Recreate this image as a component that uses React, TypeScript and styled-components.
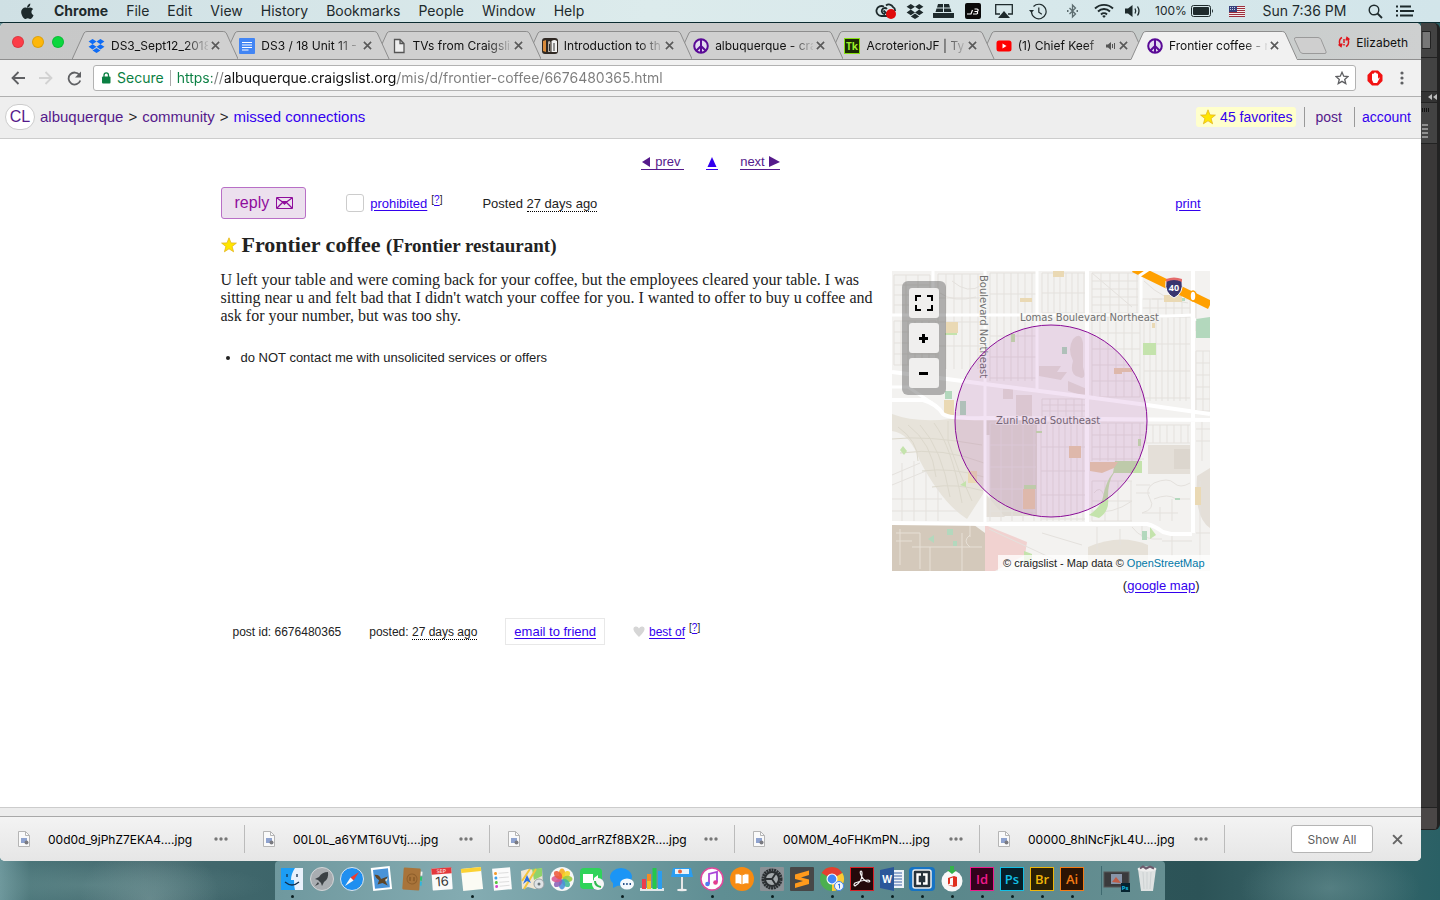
import React from "react";
import styled, { createGlobalStyle, css } from "styled-components";

const ui = `Inter, "Liberation Sans", sans-serif`;
const sans = `"Liberation Sans", Helvetica, Arial, sans-serif`;
const serif = `"Liberation Serif", "Times New Roman", serif`;

const GlobalStyle = createGlobalStyle`
  *, *::before, *::after { box-sizing: border-box; }
  body { margin: 0; font-family: ${sans}; color: #222; }
  button { font: inherit; color: inherit; background: none; border: 0; padding: 0; cursor: pointer; }
  svg { display: block; flex: none; }
`;

/* ---------- desktop ---------- */

const Desktop = styled.div`
  display: flex;
  flex-direction: column;
  min-height: 100vh;
  overflow: hidden;
  background:
    radial-gradient(ellipse 180px 24px at 90px 885px, rgba(120, 160, 160, 0.35), transparent),
    radial-gradient(ellipse 70px 60px at 150px 900px, rgba(140, 170, 172, 0.45), transparent),
    radial-gradient(ellipse 90px 40px at 1330px 888px, rgba(120, 160, 162, 0.4), transparent),
    linear-gradient(90deg, #6d979c 0, #4a7478 30px, #45696e 150px, #3d656a 280px, #2c5357 1200px, #3d686c 1330px, #2a6065 100%);
`;

const MenuBar = styled.header`
  display: flex;
  justify-content: space-between;
  align-items: center;
  height: 23px;
  padding: 0 22px 0 21px;
  background: linear-gradient(90deg, #cfe0e4, #dcebec 45%, #d2e5ea);
  border-bottom: 1px solid #0b2b30;
  font-family: ${ui};
  font-size: 14px;
  line-height: 22px;
  color: #1e2a2c;
`;

const MenuList = styled.nav`
  display: flex;
  align-items: center;
  gap: 18px;
`;

const AppleMark = styled.svg`
  margin-right: 2px;
`;

const MenuItem = styled.button<{ $bold?: boolean }>`
  font-weight: ${(p) => (p.$bold ? 700 : 400)};
`;

const StatusArea = styled.div`
  display: flex;
  align-items: center;
`;

const StatusSlot = styled.button<{ $w: number }>`
  display: flex;
  align-items: center;
  justify-content: center;
  gap: 4px;
  width: ${(p) => p.$w}px;
  height: 22px;
  font-size: ${(p) => (p.$w === 75 ? 12 : 14)}px;
  white-space: nowrap;
`;

const Stage = styled.div`
  display: flex;
  flex: 1;
`;

/* ---------- browser window ---------- */

const Window = styled.div`
  position: relative;
  z-index: 1;
  display: flex;
  flex: 1;
  flex-direction: column;
  min-width: 0;
  overflow: hidden;
  border-radius: 5px;
  background: #fff;
`;

const TabStrip = styled.div`
  display: flex;
  height: 37px;
  background: linear-gradient(90deg, #c7c8c8, #cacaca 50%, #c6cbca 80%, #ced0d0);
  box-shadow: inset 0 -1px #8f8f8f;
`;

const Lights = styled.div`
  display: flex;
  gap: 8px;
  width: 72px;
  padding: 13px 0 0 12px;
`;

const Light = styled.button<{ $c: string }>`
  width: 12px;
  height: 12px;
  border-radius: 50%;
  background: ${(p) => p.$c};
  box-shadow: inset 0 0 0 1px rgba(0, 0, 0, 0.12);
`;

const Tabs = styled.div`
  display: flex;
  flex: 1;
  min-width: 0;
  padding-top: 8px;
`;

const TabBox = styled.div<{ $z: number }>`
  position: relative;
  z-index: ${(p) => p.$z};
  display: flex;
  flex: 1;
  align-items: center;
  min-width: 0;
  height: 29px;
  padding-left: 16px;
  font-family: ${ui};
  font-size: 12px;
  color: #111;
`;

const TabShape = styled.svg`
  position: absolute;
  left: 0;
  top: 0;
  width: calc(100% + 15px);
  height: 29px;
  z-index: -1;
`;

const TabTitle = styled.button`
  flex: 1;
  min-width: 0;
  margin-left: 6px;
  overflow: hidden;
  text-align: left;
  white-space: nowrap;
  line-height: 20px;
  mask-image: linear-gradient(90deg, #000 76%, rgba(0, 0, 0, 0.1));
`;

const TabClose = styled.button`
  display: flex;
  padding: 3px;
`;

const NewTab = styled.button`
  width: 36px;
  padding: 7px 0 0 11px;
`;

const Profile = styled.button`
  display: flex;
  align-items: center;
  gap: 6px;
  height: 20px;
  margin: 9px 13px 0 20px;
  font-family: ${ui};
  font-size: 12px;
  color: #111;
`;

const StripEnd = styled.div`
  display: flex;
`;

const Toolbar = styled.div`
  display: flex;
  align-items: center;
  height: 37px;
  padding-left: 11px;
  background: #f1f1f1;
  border-bottom: 1px solid #b0b0b0;
`;

const NavButton = styled.button`
  width: 28px;
`;

const Omnibox = styled.div`
  display: flex;
  flex: 1;
  align-items: center;
  height: 26px;
  margin: 0 11px 0 -2px;
  padding: 0 6px 0 7px;
  background: #fff;
  border: 1px solid #b2b2b2;
  border-radius: 3px;
  font-family: ${ui};
  font-size: 14px;
`;

const Secure = styled.button`
  display: flex;
  align-items: center;
  gap: 6px;
  padding-right: 6px;
  margin-right: 6px;
  border-right: 1px solid #aaa;
  line-height: 16px;
  color: #0b8043;
`;

const Address = styled.input`
  flex: 1;
  min-width: 0;
  padding: 0;
  border: 0;
  outline: 0;
  font: inherit;
  line-height: 20px;
  color: #222;
  background: linear-gradient(90deg, #0b8043 35px, #7c7c7c 35px 48px, #111 48px 220px, #7c7c7c 220px);
  background-clip: text;
  -webkit-text-fill-color: transparent;
`;

const ToolButton = styled.button`
  display: flex;
  justify-content: center;
  width: 38px;
`;

/* ---------- craigslist page ---------- */

const link = css<{ $visited?: boolean }>`
  color: ${(p) => (p.$visited ? "#551a8b" : "#3300ee")};
`;

const A = styled.a<{ $visited?: boolean }>`
  ${link}
  text-underline-offset: 2px;
`;

const PageHeader = styled.header`
  display: flex;
  justify-content: space-between;
  align-items: center;
  height: 42px;
  padding: 0 10px 1px 5px;
  background: #eee;
  border-bottom: 1px solid #ccc;
  font-size: 15px;
  line-height: 20px;
`;

const Crumbs = styled.nav`
  display: flex;
  align-items: center;
  gap: 5px;
  a { text-decoration: none; }
`;

const Logo = styled.a`
  display: flex;
  align-items: center;
  justify-content: center;
  width: 30px;
  height: 26px;
  border: 1px solid #ccc;
  border-radius: 13px;
  background: #fff;
  color: #551a8b;
  font-size: 16px;
`;

const UserLinks = styled.nav`
  display: flex;
  align-items: center;
  font-size: 14px;
  a { text-decoration: none; }
`;

const Favorites = styled.a`
  display: flex;
  align-items: center;
  gap: 4px;
  height: 20px;
  margin-right: 8px;
  padding: 0 4px;
  border-radius: 3px;
  background: #ffffcc;
  color: #3300ee;
`;

const UserLink = styled.a<{ $visited?: boolean; $pad: number }>`
  ${link}
  border-left: 1px solid #999;
  padding: 0 ${(p) => (p.$visited ? 12 : 0)}px 0 ${(p) => p.$pad}px;
`;

const Main = styled.main`
  flex: 1;
  width: 980px;
  max-width: 100%;
  margin: 0 auto;
  font-size: 13px;
`;

const Pager = styled.nav`
  display: flex;
  justify-content: center;
  gap: 22px;
  padding: 15px 0 17px;
  line-height: 18px;
`;

const PagerLink = styled.a<{ $visited?: boolean }>`
  ${link}
  display: flex;
  align-items: center;
  gap: 4px;
  height: 15px;
  margin-top: 1px;
  border-bottom: 1px solid;
  text-decoration: none;
`;

const Actions = styled.div`
  display: flex;
  align-items: center;
  height: 32px;
`;

const Reply = styled.button`
  display: flex;
  align-items: center;
  gap: 7px;
  height: 32px;
  margin-right: 40px;
  padding: 0 12px 0 13px;
  border: 1px solid #b86fc6;
  border-radius: 3px;
  background: #ece0ee;
  color: #8f0c9c;
  font-size: 16px;
`;

const Flag = styled.label`
  display: flex;
  align-items: center;
  gap: 6px;
  margin-right: 40px;
`;

const Tick = styled.input`
  appearance: none;
  width: 18px;
  height: 18px;
  margin: 0;
  border: 1px solid #ccc;
  border-radius: 3px;
  background: #fff;
`;

const Sup = styled.sup`
  margin-left: 4px;
  font-size: 10px;
  line-height: 9px;
`;

const Ago = styled.time`
  border-bottom: 1px dotted #000;
`;

const Print = styled(A)`
  margin-left: auto;
`;

const Title = styled.h2`
  display: flex;
  align-items: center;
  gap: 5px;
  margin: 12px 0;
  font-family: ${serif};
  font-size: 22px;
  line-height: 27px;
  small { font-size: 19px; }
`;

const Posting = styled.section`
  display: flex;
  justify-content: space-between;
  margin-right: -9px;
`;

const Copy = styled.div`
  width: 656px;
`;

const Body = styled.p`
  margin: 0 0 24px;
  font-family: ${serif};
  font-size: 16px;
  line-height: 18px;
`;

const Notices = styled.ul`
  margin: 0;
  padding-left: 20px;
  line-height: 18px;
`;

const MapColumn = styled.aside`
  width: 318px;
`;

const MapFrame = styled.div`
  position: relative;
  height: 300px;
`;

const MapControls = styled.div`
  position: absolute;
  left: 10px;
  top: 10px;
  display: flex;
  flex-direction: column;
  gap: 5px;
  padding: 7px;
  border-radius: 6px;
  background: rgba(80, 80, 80, 0.42);
`;

const MapButton = styled.button`
  display: flex;
  align-items: center;
  justify-content: center;
  width: 30px;
  height: 30px;
  border-radius: 3px;
  background: #f0efee;
`;

const Credit = styled.div`
  position: absolute;
  right: 0;
  bottom: 0;
  padding: 0 5px;
  background: rgba(255, 255, 255, 0.75);
  font-size: 11px;
  line-height: 16px;
  white-space: nowrap;
  a { color: #0078a8; text-decoration: none; }
`;

const GoogleMap = styled.p`
  margin: 6px 10px 0 0;
  line-height: 18px;
  text-align: right;
`;

const PostInfo = styled.footer`
  display: flex;
  align-items: center;
  gap: 28px;
  margin-top: 23px;
  padding-left: 12px;
  font-size: 12px;
  line-height: 16px;
`;

const EmailBox = styled.div`
  height: 27px;
  padding: 5px 8px;
  border: 1px solid #e8e8e8;
  font-size: 13px;
`;

const BestOf = styled.span`
  display: flex;
  align-items: center;
  gap: 4px;
`;

const PageFoot = styled.div`
  height: 9px;
  background: #ececec;
  border-top: 1px solid #ccc;
`;

/* ---------- downloads ---------- */

const Downloads = styled.div`
  display: flex;
  align-items: center;
  height: 45px;
  padding-right: 18px;
  border-top: 1px solid #a8a8a8;
  background: linear-gradient(#f3f3f3, #e6e6e6);
  font-family: ${ui};
  font-size: 12px;
  color: #000;
`;

const Download = styled.div`
  display: flex;
  align-items: center;
  width: 245px;
  height: 28px;
  padding: 0 16px 0 18px;
  border-right: 1px solid #bbb;
`;

const FileName = styled.button`
  margin: 0 auto 0 18px;
`;

const ShowAll = styled.button`
  width: 82px;
  height: 28px;
  margin: 0 19px 0 auto;
  border: 1px solid #b5b5b5;
  border-radius: 3px;
  background: #fff;
  color: #5c5c5c;
`;

/* ---------- panel behind the window ---------- */

const Panel = styled.aside`
  display: flex;
  flex-direction: column;
  width: 19px;
  margin-bottom: 31px;
  border-right: 3px solid #222;
  border-radius: 0 6px 6px 0;
  background: #3c3c3c;
  overflow: hidden;
`;

const PanelCell = styled.div<{ $h?: number; $bg?: string }>`
  display: flex;
  align-items: center;
  height: ${(p) => (p.$h ? p.$h + "px" : "auto")};
  flex: ${(p) => (p.$h ? "none" : 1)};
  padding-left: 1px;
  background: ${(p) => p.$bg || "#434343"};
  border-bottom: 1px solid #222;
`;

/* ---------- dock ---------- */

const Dock = styled.nav`
  display: flex;
  align-self: center;
  height: 39px;
  padding: 0 3px 0 2px;
  border-radius: 4px 4px 0 0;
  background: linear-gradient(90deg, #6f989e, #84acb2 22%, #5f8e93 50%, #5a878b 75%, #668f92);
`;

const DockItem = styled.button<{ $on?: boolean }>`
  display: flex;
  flex-direction: column;
  align-items: center;
  width: 30px;
  padding-top: 6px;
  &::after {
    content: "";
    width: 3px;
    height: 3px;
    margin-top: 4px;
    border-radius: 50%;
    background: ${(p) => (p.$on ? "#0c2022" : "transparent")};
  }
`;

const DockRule = styled.span`
  width: 1px;
  height: 29px;
  margin: 5px 0 0 14px;
  background: #3f6a70;
`;

/* ---------- small icons ---------- */

const Cross = ({ s = 9, c = "#555", w = 2 }: { s?: number; c?: string; w?: number }) => (
  <svg width={s} height={s} viewBox="0 0 10 10">
    <path d="M1 1l8 8M9 1l-8 8" stroke={c} strokeWidth={w} fill="none" />
  </svg>
);

const Dropbox = ({ c, w = 17 }: { c: string; w?: number }) => (
  <svg width={w} height={w} viewBox="0 0 18 18" fill={c}>
    <path d="M4.8 2L9 4.8 4.8 7.6.6 4.8zM13.2 2l4.2 2.8-4.2 2.8L9 4.8zM4.8 7.6L9 10.4l-4.2 2.8-4.2-2.8zM13.2 7.6l4.2 2.8-4.2 2.8L9 10.4zM9 11.6l4.2 2.8L9 17l-4.2-2.6z" />
  </svg>
);

const Peace = () => (
  <svg width="16" height="16" viewBox="0 0 16 16" fill="none" stroke="#5a0a96" strokeWidth="2">
    <circle cx="8" cy="8" r="6.8" fill="#e3daf0" />
    <path d="M8 1v14M8 8l-4.8 4.8M8 8l4.8 4.8" />
  </svg>
);

const Star = ({ s }: { s: number }) => (
  <svg width={s} height={s} viewBox="0 0 16 16">
    <path d="M8 .8l2 5.1 5.4.2-4.3 3.4 1.5 5.3L8 11.8l-4.6 3 1.5-5.3L.6 6.1 6 5.9z" fill="#ffe600" stroke="#e3b51d" strokeWidth=".8" />
  </svg>
);

const tabIcons: Record<string, React.ReactNode> = {
  dropbox: <Dropbox c="#0f6cf5" w={17} />,
  docs: (
    <svg width="16" height="16" viewBox="0 0 16 16">
      <rect width="16" height="16" rx="1" fill="#4285f4" />
      <path d="M3 4.5h10M3 7h10M3 9.500h10M3 12h6.500" stroke="#fff" strokeWidth="1.2" />
    </svg>
  ),
  page: (
    <svg width="16" height="16" viewBox="0 0 16 16" fill="#eee" stroke="#555" strokeWidth="1.3">
      <path d="M3.500 1.500h5.500l4 4v9h-9.500zM9 1.500v4h4" />
    </svg>
  ),
  book: (
    <svg width="16" height="16" viewBox="0 0 16 16">
      <rect width="16" height="16" rx="3" fill="#2f2823" />
      <path d="M1 3l3-1v12l-3-1z" fill="#d98a3a" />
      <path d="M6 4q1-2 2.500 0v10H6z" fill="#b9b2a8" />
      <path d="M9.500 3q3-2 5.500 0v11H9.500z" fill="#f2f2f2" />
      <path d="M12 5v8M7.500 6v7" stroke="#333" />
    </svg>
  ),
  peace: <Peace />,
  typekit: (
    <svg width="16" height="16" viewBox="0 0 16 16">
      <rect x=".5" y=".5" width="15" height="15" fill="#1c2a05" stroke="#87e013" />
      <text x="8" y="12" textAnchor="middle" fontFamily="Open Sans, sans-serif" fontWeight="700" fontSize="10" fill="#9cf02a">Tk</text>
    </svg>
  ),
  youtube: (
    <svg width="16" height="16" viewBox="0 0 16 16">
      <rect x=".5" y="2.500" width="15" height="11" rx="2.500" fill="#f00" />
      <path d="M6.500 5.500l4 2.500-4 2.500z" fill="#fff" />
    </svg>
  ),
};

const tabs = [
  { icon: "dropbox", title: "DS3_Sept12_2018" },
  { icon: "docs", title: "DS3 / 18 Unit 11 -" },
  { icon: "page", title: "TVs from Craigslis" },
  { icon: "book", title: "Introduction to th" },
  { icon: "peace", title: "albuquerque - cra" },
  { icon: "typekit", title: "AcroterionJF | Typ" },
  { icon: "youtube", title: "(1) Chief Keef", audio: true },
  { icon: "peace", title: "Frontier coffee - r", active: true },
];

const Tab = ({ t, i }: { t: (typeof tabs)[number]; i: number }) => (
  <TabBox $z={t.active ? 20 : 10 - i}>
    <TabShape viewBox="0 0 166 29" preserveAspectRatio="none">
      <path
        d="M0 28.500L12 2Q13 .5 15 .5H151Q153 .5 154 2L166 28.500V29H0z"
        fill={t.active ? "#f1f1f1" : "#d0d0d0"}
      />
      <path
        d={"M0 28.500L12 2Q13 .5 15 .5H151Q153 .5 154 2L166 28.500" + (t.active ? "" : "H0")}
        fill="none"
        stroke="#8d8d8d"
        vectorEffect="non-scaling-stroke"
      />
    </TabShape>
    {tabIcons[t.icon]}
    <TabTitle>{t.title}</TabTitle>
    {t.audio && (
      <svg width="10" height="10" viewBox="0 0 10 10">
        <path d="M0 3.500h2L5 1v8L2 6.500H0z" fill="#555" />
        <path d="M6.500 3v4M8.500 2v6" stroke="#555" />
      </svg>
    )}
    <TabClose aria-label="Close tab"><Cross s={9} c="#5a5a5a" w={1.8} /></TabClose>
  </TabBox>
);

/* ---------- menu bar icons ---------- */

const ink = "#1e2a2c";
const statusIcons: { w: number; el: React.ReactNode }[] = [
  {
    w: 29,
    el: (
      <svg width="22" height="18" viewBox="0 0 22 18" fill="none" stroke={ink} strokeWidth="1.800">
        <path d="M11 3.500a4.500 4.500 0 0 1 7 1.500 4 4 0 0 1 2 4M12 14H6.500a5 5 0 1 1 2.500-9.300" />
        <path d="M12 7a3 3 0 1 0-2 5M12 12L8.500 8.500" />
        <circle cx="16" cy="12" r="5" fill="#e00b0b" stroke="none" />
      </svg>
    ),
  },
  { w: 29, el: <Dropbox c={ink} w={18} /> },
  {
    w: 29,
    el: (
      <svg width="21" height="16" viewBox="0 0 21 16" fill={ink}>
        <path d="M5 1h5v3.500H4zM11 1h5l1 3.500h-6zM3.500 5.500H10V9H2.500zM11 5.500h6.500l1 3.500H11zM0 10h21v4.500q0 .5-1 .5H1q-1 0-1-.5z" />
      </svg>
    ),
  },
  {
    w: 29,
    el: (
      <svg width="16" height="16" viewBox="0 0 16 16">
        <rect width="16" height="16" rx="2" fill="#0a0a0a" />
        <path d="M2 11h4l1.500-4M8 11h3.500q2-.5.5-2.500H9.500h3q1.500-2-.5-2.500H9.500" fill="none" stroke="#fff" strokeWidth="1.200" />
      </svg>
    ),
  },
  {
    w: 34,
    el: (
      <svg width="18" height="16" viewBox="0 0 18 16">
        <path d="M5 11H.7V1.700h16.600V11H13" fill="none" stroke={ink} strokeWidth="1.300" />
        <path d="M9 8l6 7H3z" fill={ink} />
      </svg>
    ),
  },
  {
    w: 34,
    el: (
      <svg width="18" height="17" viewBox="0 0 18 17" fill="none" stroke={ink} strokeWidth="1.200">
        <path d="M2.500 9a7.300 7.300 0 1 0 2-5.500M9.800 4.500v4.700l3 2" />
        <path d="M0 7l2.500 3L5 7z" fill={ink} stroke="none" />
      </svg>
    ),
  },
  {
    w: 34,
    el: (
      <svg width="13" height="16" viewBox="0 0 13 16" fill="none" stroke="#5c6c6f" strokeWidth="1.300">
        <path d="M3.500 5l6 6L6.500 14V2l3 3-6 6" />
        <path d="M1 8h1.500M10.500 8H12" strokeWidth="2" />
      </svg>
    ),
  },
  {
    w: 29,
    el: (
      <svg width="20" height="16" viewBox="0 0 20 16" fill="none" stroke={ink} strokeWidth="1.900">
        <path d="M1 5.500a13 13 0 0 1 18 0M4 8.500a8.600 8.600 0 0 1 12 0M7 11.500a4.300 4.300 0 0 1 6 0" />
        <path d="M10 15l-1.800-2.100a2.800 2.800 0 0 1 3.600 0z" fill={ink} stroke="none" />
      </svg>
    ),
  },
  {
    w: 29,
    el: (
      <svg width="18" height="14" viewBox="0 0 18 14" fill="none" stroke={ink} strokeWidth="1.300">
        <path d="M1 4.500h3L8.500 1v12L4 9.500H1z" fill={ink} stroke="none" />
        <path d="M11 4.500q1.500 2.500 0 5M13.500 2.500q3 4.500 0 9" />
      </svg>
    ),
  },
  {
    w: 75,
    el: (
      <>
        100%
        <svg width="23" height="12" viewBox="0 0 23 12">
          <rect x=".5" y=".5" width="19" height="11" rx="2" fill="none" stroke={ink} />
          <rect x="2" y="2" width="16" height="8" rx="1" fill={ink} />
          <path d="M21 4q2 2 0 4z" fill={ink} />
        </svg>
      </>
    ),
  },
  {
    w: 29,
    el: (
      <svg width="16" height="11" viewBox="0 0 16 11">
        <rect width="16" height="11" fill="#f3eeee" />
        <path d="M0 .5h16M0 2.500h16M0 4.500h16M0 6.500h16M0 8.500h16M0 10.500h16" stroke="#9c2f3d" />
        <rect width="8" height="6" fill="#37427d" />
        <path d="M1 1.500h6M1 3.500h6" stroke="#c8cce4" strokeDasharray="1 1" />
      </svg>
    ),
  },
  { w: 107, el: "Sun 7:36 PM" },
  {
    w: 34,
    el: (
      <svg width="15" height="15" viewBox="0 0 15 15" fill="none" stroke={ink} strokeWidth="1.400">
        <circle cx="6" cy="6" r="4.800" />
        <path d="M9.500 9.500l4.500 4.500" strokeWidth="1.800" />
      </svg>
    ),
  },
  {
    w: 26,
    el: (
      <svg width="18" height="12" viewBox="0 0 18 12" stroke={ink} strokeWidth="1.800">
        <path d="M0 1.500h2M4 1.500h11M0 6h2M4 6h14M0 10.500h2M4 10.500h13" />
      </svg>
    ),
  },
];

/* ---------- map drawing ---------- */

const lines = (x0: number, y0: number, x1: number, y1: number, dx: number, dy: number) => {
  let d = "";
  for (let x = x0; x <= x1; x += dx) d += `M${x} ${y0}V${y1}`;
  for (let y = y0; y <= y1; y += dy) d += `M${x0} ${y}H${x1}`;
  return d;
};

const MapDrawing = () => (
  <svg width="318" height="300" viewBox="0 0 318 300">
    <rect width="318" height="300" fill="#f3f2f0" />
    <path d="M0 143Q24 152 58 148H93V220L75 248Q50 232 28 190 18 162 0 160z" fill="#e7e3da" />
    <path d="M98 163h47v82H98zM93 148h52v16H93z" fill="#dfdad3" />
    <path d="M93 222l20 24h-20zM256 174h42v29h-42zM111 118h10v10h-10zM124 124h16v22h-16zM147 95h22l-4 6h10l-6 8-22-4zM176 110l19 8v8l-19-6zM181 68q8-8 10 4v24q4 14-4 10-10-2-6-16-6-12 0-22zM305 205l13-8v60q-16-10-13-52z" fill="#e4dfd8" />
    <path d="M282 178h16v20h-16z" fill="#dcd6ce" />
    <path d="M0 254H82l11 8v38H0z" fill="#d4c9bb" />
    <path d="M196 276q32-14 60-2v26h-60z" fill="#e6e1d8" />
    <path d="M93 254l42 17-2 13-30 16H93z" fill="#f1d2d0" />
    {/* minor streets */}
    <g fill="none" stroke="#e4e1dd" strokeWidth="1">
      <path d={lines(2, 4, 38, 44, 12, 10)} />
      <path d={lines(46, 3, 92, 98, 8, 24)} />
      <path d={lines(98, 2, 144, 110, 7, 21)} />
      <path d={lines(150, 2, 194, 42, 6, 20)} />
      <path d={lines(200, 46, 248, 126, 8, 16)} />
      <path d={lines(200, 2, 246, 42, 9, 8)} />
      <path d={lines(252, 46, 298, 130, 6, 27)} />
      <path d={lines(250, 28, 298, 44, 8, 9)} />
      <path d={lines(304, 80, 318, 140, 7, 12)} />
      <path d={lines(2, 50, 44, 94, 7, 11)} />
      <path d={lines(150, 128, 194, 146, 8, 6)} />
      <path d={lines(149, 152, 194, 250, 6, 24)} />
      <path d={lines(200, 152, 252, 190, 8, 12)} />
      <path d={lines(254, 154, 298, 172, 7, 18)} />
      <path d={lines(98, 152, 144, 250, 11, 22)} />
      <path d={lines(200, 210, 240, 250, 13, 20)} />
      <path d="M0 204l28-12M0 214l34-14M0 228h50M0 240h70M10 192v58M22 190v60M34 200v50M46 215v35M304 158h14M304 170h14M310 150v40M200 240q20 4 40-10M97 258l90 42M150 262l40 12M205 256v30M228 258v16M250 254v12M270 270h30M280 265v20M304 262h14M308 210v80M240 256q10 14 30 12" />
      <path d="M262 212q-10 6-4 16t-8 14h36M262 212q14-6 20 0t16 0M262 228q14-6 22 0h14M268 236v14M280 228v22M244 214h14M244 222h14M202 222q6-8 10 2t-4 18" />
      <path d="M200 2l40 34M252 10q20 20 44 22M304 20v40M260 28h10M60 10q16 14 30 4M48 22q14 10 36 4" />
    </g>
    <g fill="none" stroke="#dcd8cc" strokeWidth="1">
      <path d="M6 156q20 14 20 34M16 154q24 18 28 52M28 154q22 24 30 72M42 152q18 24 28 80M56 150v20q10 30 24 60M0 168q34-4 90 6M8 182q44-6 84 10M30 200q30-4 62 6M40 216q24-4 52 4" />
    </g>
    <path d="M4 262h24v36M4 270h16M8 258v36M20 276h70M38 276v24M70 262v38M78 254v12M78 264q-8 6 0 12" fill="none" stroke="#e7e0d6" />
    {/* parks, schools */}
    <path d="M53 62h12v2H53zM251 72h13v12h-13zM119 63h4v8h-4zM8 179l3-4 4 5-3 4zM245 190h5v12h-28q-6 8-6 24 2 14-9 21l-10-3q12-8 14-18 3-16 10-24l2-12zM132 214h12v4h-12zM258 256l6 8-6 4zM246 168h3v7h-3zM175 288l6 2-4 4zM68 214l6-4v6zM144 160h6v2h-6zM132 280l8 3v10h-8z" fill="#c4e3ac" />
    <path d="M304 48l14-2v21h-14zM170 76h5v7h-5zM68 130h6v14h-6zM250 260h5v9h-5zM36 268l6-4v8zM55 258h6v6h-6zM210 196l4-4-1 8zM284 27h9v3h-9zM283 227h5v2h-5zM53 120h7v8h-7zM61 270h4v5h-4z" fill="#b3d8bd" />
    <path d="M161 0h11v6h-11zM54 51h12v11H54zM52 129h10v15H52zM76 200h9v12h-9zM272 24h18v7h-18zM303 216h6v18h-6zM128 27h12v4h-12zM260 52h3v5h-3z" fill="#ead9b4" />
    <path d="M177 175h12v12h-12zM198 191h28l-4 6-12 5-12-2zM131 218h12v20h-12zM222 97h18v4h-10v2h-8z" fill="#e8cfae" />
    {/* major roads */}
    <g fill="none" stroke="#fff" strokeWidth="3" strokeLinejoin="round">
      <path d="M0 44H246Q262 46 300 44M41 0V44M93 0V252M145 0V118M249 0V44M0 116h16l24 16M304 48l-4 2" />
      <path d="M0 101l55 7 38 5 102 13 60 8 63 9M0 129h31q14 4 20 14 6 5 42 4l225 2M195 0V252M0 252l93 1h162q8 2 16 8l8 2h21M301 0V262" strokeWidth="4" />
    </g>
    <path d="M242-3l76 37" stroke="#ffa000" strokeWidth="9" fill="none" />
    <path d="M247 5l12-8" stroke="#fff" strokeWidth="3" />
    <ellipse cx="301" cy="25" rx="3" ry="5" fill="#fff" stroke="#ffa000" strokeWidth="1.500" />
    <path d="M274 10q8-4 16 0 2 12-8 17-10-5-8-17z" fill="#39356f" stroke="#fff" />
    <path d="M274 11q8-4 16 0v-3q-8-3-16 0z" fill="#e46b6b" />
    <text x="282" y="20" textAnchor="middle" fontFamily="Open Sans, sans-serif" fontSize="9" fontWeight="700" fill="#fff">40</text>
    <g fontFamily="DejaVu Sans, sans-serif" fontSize="10" fill="#707070" stroke="#f6f5f3" strokeOpacity=".7" strokeWidth="2" paintOrder="stroke">
      <text x="128" y="50">Lomas Boulevard Northeast</text>
      <text x="104" y="153">Zuni Road Southeast</text>
      <text transform="translate(88 4) rotate(90)">Boulevard Northeast</text>
    </g>
    <circle cx="159" cy="150" r="96" fill="#8f0099" fillOpacity=".11" stroke="#8a0c98" strokeWidth="1" />
  </svg>
);

/* ---------- dock drawings ---------- */

const adobe = (t: string, c: string, bg: string) => (
  <>
    <rect x=".5" y=".5" width="23" height="23" fill={bg} stroke={c} />
    <text x="12" y="17" textAnchor="middle" fontFamily="Open Sans, sans-serif" fontWeight="600" fontSize="13" fill={c}>{t}</text>
  </>
);

const petals = ["#f7a81b", "#f5d327", "#9ccc3c", "#43b89a", "#4a90d9", "#8b62b8", "#d8588f", "#ee5a3a"];

const dock: { name: string; on?: boolean; el: React.ReactNode }[] = [
  {
    name: "Finder", on: true, el: (
      <>
        <rect x="1" y="1" width="22" height="22" fill="#e9f1fb" />
        <path d="M1 1h14q-4 6-4 12h3q0 6 1 10H1z" fill="#1c9df5" />
        <path d="M7 7v3M17 7v3M5 15q7 6 14 0" fill="none" stroke="#13304f" strokeWidth="1.300" />
      </>
    ),
  },
  {
    name: "Launchpad", el: (
      <>
        <circle cx="12" cy="12" r="11.500" fill="#a9adb1" stroke="#d3d6d8" />
        <path d="M18 5q-6 0-9 5l-4 2 3 1 3 3 1 3 2-4q5-3 4-10zM8 15l-3 4 4-2z" fill="#3b4044" />
      </>
    ),
  },
  {
    name: "Safari", el: (
      <>
        <circle cx="12" cy="12" r="11.500" fill="#1f8ff0" stroke="#dfe6ea" />
        <path d="M19 5l-5.500 8.500-3-3z" fill="#f03b2e" />
        <path d="M5 19l5.500-8.500 3 3z" fill="#f7f7f7" />
      </>
    ),
  },
  {
    name: "Mail", el: (
      <g transform="rotate(-6 12 12)">
        <rect x="2" y="0" width="19" height="23" fill="#fff" />
        <rect x="4" y="2" width="15" height="19" fill="#4a93d8" />
        <path d="M5 7q5 0 6 5l7-2-3 4 2 5-5-3-5 1 2-4q-3-2-4-6z" fill="#5f4527" /><path d="M15 13l3-1-2 3z" fill="#f3e9d0" />
      </g>
    ),
  },
  {
    name: "Contacts", el: (
      <g transform="rotate(4 12 12)">
        <path d="M20 4h2v4h-2z" fill="#f4f4f4" /><path d="M20 9h2v4h-2z" fill="#2bc86b" /><path d="M20 14h2v4h-2z" fill="#2bb8e0" />
        <rect x="3" y="1" width="17" height="22" rx="1" fill="#a9743a" />
        <circle cx="12" cy="12" r="5" fill="none" stroke="#8f5f2b" /><path d="M9 10h2v4H9zM13 10h2v4h-2z" fill="#8f5f2b" />
      </g>
    ),
  },
  {
    name: "Calendar", el: (
      <g transform="rotate(-4 12 12)">
        <rect x="2" y="1" width="20" height="22" rx="1" fill="#fafafa" />
        <rect x="2" y="1" width="20" height="6" fill="#e4373b" />
        <text x="12" y="6" textAnchor="middle" fontFamily="Inter, sans-serif" fontSize="5" fill="#fff">SEP</text>
        <text x="12" y="19" textAnchor="middle" fontFamily="Inter, sans-serif" fontSize="13" fill="#333">16</text>
      </g>
    ),
  },
  {
    name: "Notes", on: true, el: (
      <g transform="rotate(-6 12 12)">
        <rect x="2" y="1" width="20" height="22" fill="#fbfbf4" />
        <rect x="2" y="1" width="20" height="4" fill="#fbd233" />
      </g>
    ),
  },
  {
    name: "Reminders", el: (
      <g transform="rotate(-5 12 12)">
        <rect x="3" y="1" width="18" height="22" fill="#fbfbfb" />
        <circle cx="6" cy="6" r="1.500" fill="#f59b2b" /><circle cx="6" cy="10.500" r="1.500" fill="#3ba0ea" /><circle cx="6" cy="15" r="1.500" fill="#55c33c" /><circle cx="6" cy="19" r="1.500" fill="#d64ac8" />
        <path d="M9 6h10M9 10.500h10M9 15h10M9 19h10" stroke="#ddd" />
      </g>
    ),
  },
  {
    name: "Maps", el: (
      <>
        <path d="M1 4l7-2 7 1 7-2 1 18-8 3-7-2-6 2z" fill="#f0e6d4" />
        <path d="M12 2l10-1v8l-8 4z" fill="#8fd36b" /><path d="M2 14l8-12M4 22l12-20" stroke="#f3c53c" strokeWidth="2" />
        <path d="M7 8l4 8-4-2-4 3z" fill="#2f6fe0" />
        <circle cx="19" cy="17" r="5" fill="#dfe3e6" stroke="#9aa2a6" /><circle cx="19" cy="17" r="1.500" fill="#6b7478" />
      </>
    ),
  },
  {
    name: "Photos", el: (
      <>
        <circle cx="12" cy="12" r="12" fill="#f7f7f7" />
        {petals.map((c, i) => (
          <ellipse key={c} cx="12" cy="6.500" rx="3.200" ry="5" fill={c} fillOpacity=".88" transform={`rotate(${i * 45} 12 12)`} />
        ))}
      </>
    ),
  },
  {
    name: "FaceTime", el: (
      <>
        <rect x="0" y="1" width="22" height="21" rx="4" fill="#2fd35a" />
        <path d="M3 7h10v9H3zM14 11l4-3v8l-4-3z" fill="#fff" />
        <circle cx="18" cy="17" r="6" fill="#f7f7f7" /><path d="M15 14q0 5 6 6" stroke="#2fb84f" strokeWidth="2" fill="none" />
      </>
    ),
  },
  {
    name: "Messages", on: true, el: (
      <>
        <ellipse cx="11" cy="10" rx="11" ry="9" fill="#1b95f5" /><path d="M3 14v7l6-3z" fill="#1b95f5" />
        <ellipse cx="17" cy="17" rx="7" ry="5.500" fill="#f4f8fc" /><path d="M13 17h1.500M16.200 17h1.500M19.500 17H21" stroke="#28528a" strokeWidth="1.800" />
      </>
    ),
  },
  {
    name: "Numbers", el: (
      <>
        <path d="M0 21h24v3H0z" fill="#dfe6e8" />
        <path d="M2 12h4v10H2z" fill="#ef3b4c" /><path d="M7 7h4v15H7z" fill="#f58a23" /><path d="M7 14h4v8H7z" fill="#f5c023" /><path d="M12.500 1h4v21h-4z" fill="#24c84b" /><path d="M18 4h4v18h-4z" fill="#2b9df0" />
      </>
    ),
  },
  {
    name: "Keynote", el: (
      <>
        <path d="M3 1h18l2 9H1z" fill="#2b9df0" /><path d="M5 2h14v5H5z" fill="#e9f3fa" /><circle cx="10" cy="4.500" r="2" fill="#e95f3c" />
        <path d="M12 10v12" stroke="#e7e7e7" strokeWidth="2" /><ellipse cx="12" cy="23" rx="5" ry="1.200" fill="#eee" />
      </>
    ),
  },
  {
    name: "iTunes", on: true, el: (
      <>
        <circle cx="12" cy="12" r="11" fill="#fdfdfd" stroke="#e0489c" strokeWidth="1.500" />
        <path d="M9 17V7l8-2v10" fill="none" stroke="#a946d8" strokeWidth="1.800" /><circle cx="7.500" cy="17" r="2.300" fill="#4d7df0" /><circle cx="15.500" cy="15.500" r="2.300" fill="#e33c8d" />
      </>
    ),
  },
  {
    name: "iBooks", el: (
      <>
        <circle cx="12" cy="12" r="12" fill="#f78b12" /><path d="M12 8q-3-2-7-1v10q4-1 7 1 3-2 7-1V7q-4-1-7 1zM12 8v10" fill="#fff" stroke="#f78b12" />
      </>
    ),
  },
  {
    name: "System Preferences", on: true, el: (
      <>
        <rect width="24" height="24" rx="1" fill="#8b9196" /><circle cx="12" cy="12" r="9" fill="none" stroke="#2b2f32" strokeWidth="3" strokeDasharray="2 .6" /><circle cx="12" cy="12" r="7" fill="#a3a8ab" stroke="#2b2f32" strokeWidth="2" /><path d="M12 12H5M12 12l4-6M12 12l4 6" stroke="#2b2f32" strokeWidth="1.800" />
      </>
    ),
  },
  {
    name: "Sublime Text", el: (
      <>
        <rect width="24" height="24" rx="1" fill="#474747" /><path d="M5 7.500L19 3.500v4.500l-8 2.500 8 2v4.500L5 21v-4.500l8-2.500-8-2z" fill="#ff9a1c" />
      </>
    ),
  },
  {
    name: "Chrome", on: true, el: (
      <>
        <circle cx="12" cy="12" r="12" fill="#4caf50" /><path d="M12 12L1.600 6a12 12 0 0 1 20.800 0z" fill="#e53e30" /><path d="M12 12L22.400 6A12 12 0 0 1 12 24z" fill="#fcc934" />
        <circle cx="12" cy="12" r="5.500" fill="#fff" /><circle cx="12" cy="12" r="4.400" fill="#4285f4" /><circle cx="19" cy="19" r="4.500" fill="#f0f4fa" stroke="#4285f4" /><path d="M18 18l1.500-1v4.500" stroke="#2f6fe0" fill="none" />
      </>
    ),
  },
  {
    name: "Acrobat", on: true, el: (
      <>
        <rect x=".5" y=".5" width="23" height="23" fill="#23090a" stroke="#d91f26" /><path d="M5 19q7-4 7-12 0-3-1-3-2 1 1 6t7 5q2-1-1-2-6 0-13 3-2 2 0 3z" fill="none" stroke="#f3f3f3" strokeWidth="1.200" />
      </>
    ),
  },
  {
    name: "Word", on: true, el: (
      <>
        <path d="M11 3h13v18H11z" fill="#eef2f8" /><path d="M14 6h8M14 9h8M14 12h8M14 15h8M14 18h8" stroke="#3c62a8" />
        <path d="M0 3l14-3v24L0 21z" fill="#2b579a" /><text x="7" y="16" textAnchor="middle" fontFamily="Open Sans, sans-serif" fontWeight="700" fontSize="10" fill="#fff">W</text>
      </>
    ),
  },
  {
    name: "Brackets", on: true, el: (
      <>
        <rect x="-1" width="26" height="24" rx="4" fill="#1673c4" /><rect x="3" y="3" width="18" height="18" rx="2" fill="#27323b" stroke="#eee" strokeWidth="1.500" /><path d="M11 7.500H7.500v9H11M13 7.500h3.500v9H13" fill="none" stroke="#fff" strokeWidth="2.400" />
      </>
    ),
  },
  {
    name: "Office Installer", on: true, el: (
      <>
        <circle cx="12" cy="14" r="10.500" fill="#f8f8f8" /><path d="M10-1h4v4h3l-5 4-5-4h3z" fill="#35b34a" /><path d="M8 11l6-2 3 1v9l-3 1-6-2 5 .5v-8l-3 1v5l-2 1z" fill="#e0301e" />
      </>
    ),
  },
  { name: "InDesign", on: true, el: adobe("Id", "#ee1a8c", "#33021c") },
  { name: "Photoshop", on: true, el: adobe("Ps", "#12bfe6", "#061e28") },
  { name: "Bridge", on: true, el: adobe("Br", "#efb50a", "#2a2005") },
  { name: "Illustrator", on: true, el: adobe("Ai", "#f57b14", "#2b1304") },
];

const DockSvg = ({ children }: { children: React.ReactNode }) => (
  <svg width="24" height="24" viewBox="0 0 24 24" overflow="visible">{children}</svg>
);

const files = [
  "00d0d_9jPhZ7EKA4....jpg",
  "00L0L_a6YMT6UVtj....jpg",
  "00d0d_arrRZf8BX2R....jpg",
  "00M0M_4oFHKmPN....jpg",
  "00000_8hlNcFjkL4U....jpg",
];

export default function App() {
  return (
    <Desktop>
      <GlobalStyle />
      <MenuBar>
        <MenuList>
          <AppleMark width="13" height="17" viewBox="0 0 14 17" fill={ink}>
            <path d="M10 0q.2 2-1.200 3.300T6.500 4.400Q6.400 2.600 7.500 1.400T10 0zM13.500 12.500q-1.700 4-3.600 4-1 0-2.400-.6-1.400 0-2.400.6Q3 17 1 12.500T1.700 5.600q1.500-1.700 3.400-1.400l2.200.6 2.200-.6q2.200-.2 3.600 1.700-2 1.300-1.900 3.400t2.300 3.200z" />
          </AppleMark>
          <MenuItem $bold>Chrome</MenuItem>
          {["File", "Edit", "View", "History", "Bookmarks", "People", "Window", "Help"].map((m) => (
            <MenuItem key={m}>{m}</MenuItem>
          ))}
        </MenuList>
        <StatusArea>
          {statusIcons.map((s, i) => (
            <StatusSlot key={i} $w={s.w}>{s.el}</StatusSlot>
          ))}
        </StatusArea>
      </MenuBar>

      <Stage>
        <Window>
          <TabStrip>
            <Lights>
              <Light $c="#fc3d48" aria-label="Close" />
              <Light $c="#fdb70a" aria-label="Minimise" />
              <Light $c="#0bd73e" aria-label="Zoom" />
            </Lights>
            <Tabs>
              {tabs.map((t, i) => <Tab key={i} t={t} i={i} />)}
            </Tabs>
            <StripEnd>
              <NewTab aria-label="New tab">
                <svg width="34" height="17" viewBox="0 0 34 17">
                  <path d="M3 .5h22q2 0 3 2l5 12q.5 2-1 2H10q-2 0-3-2L1.500 2.500Q1 .5 3 .5z" fill="#cfcfcf" stroke="#9a9a9a" />
                </svg>
              </NewTab>
              <Profile>
                <svg width="12" height="12" viewBox="0 0 12 12" fill="none" stroke="#e0161c" strokeWidth="1.500">
                  <path d="M4 1.500Q1 3 1.500 7L3 10M.5 8.500L3 10.500 4 7.500M8 10.500Q11 9 10.500 5L9 2M11.500 3.500L9 1.500 8 4.500M6 3v4M6 8v1.500" />
                </svg>
                Elizabeth
              </Profile>
            </StripEnd>
          </TabStrip>

          <Toolbar>
            <NavButton aria-label="Back">
              <svg width="14" height="14" viewBox="0 0 14 14" fill="none" stroke="#5f6063" strokeWidth="1.800"><path d="M14 7H1.500M7.500 1L1.500 7l6 6" /></svg>
            </NavButton>
            <NavButton aria-label="Forward">
              <svg width="14" height="14" viewBox="0 0 14 14" fill="none" stroke="#d2d2d2" strokeWidth="1.800"><path d="M0 7h12.500M6.500 1l6 6-6 6" /></svg>
            </NavButton>
            <NavButton aria-label="Reload">
              <svg width="15" height="15" viewBox="0 0 15 15" fill="none" stroke="#5f6063" strokeWidth="1.800"><path d="M12.500 4A6 6 0 1 0 13.300 9.500" /><path d="M14 .5v6H8z" fill="#5f6063" stroke="none" /></svg>
            </NavButton>
            <Omnibox>
              <Secure>
                <svg width="10" height="12" viewBox="0 0 10 12"><rect x="1" y="4.500" width="8.500" height="7" rx="1" fill="#0b8043" /><path d="M3 5V3.200a2.200 2.200 0 0 1 4.500 0V5" fill="none" stroke="#0b8043" strokeWidth="1.300" /></svg>
                Secure
              </Secure>
              <Address aria-label="Address" defaultValue="https://albuquerque.craigslist.org/mis/d/frontier-coffee/6676480365.html" />
              <svg width="14" height="14" viewBox="0 0 16 16" fill="none" stroke="#5f6063" strokeWidth="1.500"><path d="M8 1.500l2 4.500 4.800.4-3.700 3.200 1.200 4.800L8 11.800l-4.300 2.600 1.200-4.800L1.200 6.400 6 6z" /></svg>
            </Omnibox>
            <svg width="16" height="16" viewBox="0 0 16 16">
              <path d="M5 .5h6l4.500 4.500v6L11 15.500H5L.5 11V5z" fill="#f21212" />
              <path d="M5 4q1-1 1.500 0 .5-2 1.500-1.500Q9.500 2 9.500 3.500q1.500-.5 1.500 1V9l1-1.500q1 0 .5 1L10 13H6.500L5 10z" fill="#fff" />
            </svg>
            <ToolButton aria-label="Menu">
              <svg width="4" height="14" viewBox="0 0 4 14" fill="#5f6063"><circle cx="2" cy="2" r="1.600" /><circle cx="2" cy="7" r="1.600" /><circle cx="2" cy="12" r="1.600" /></svg>
            </ToolButton>
          </Toolbar>

          <PageHeader>
            <Crumbs>
              <Logo href="#">CL</Logo>
              <A href="#" $visited>albuquerque</A>
              <span>&gt;</span>
              <A href="#" $visited>community</A>
              <span>&gt;</span>
              <A href="#">missed connections</A>
            </Crumbs>
            <UserLinks>
              <Favorites href="#"><Star s={16} />45 favorites</Favorites>
              <UserLink href="#" $visited $pad={10}>post</UserLink>
              <UserLink href="#" $pad={7}>account</UserLink>
            </UserLinks>
          </PageHeader>

          <Main>
            <Pager>
              <PagerLink href="#" $visited>
                <svg width="10" height="10" viewBox="0 0 10 10"><path d="M9 0v10L1 5z" fill="currentColor" /></svg>
                prev&nbsp;
              </PagerLink>
              <PagerLink href="#">
                <svg width="12" height="10" viewBox="0 0 12 10"><path d="M6 0l4.500 10h-9z" fill="currentColor" /></svg>
              </PagerLink>
              <PagerLink href="#" $visited>
                next
                <svg width="11" height="12" viewBox="0 0 11 12"><path d="M0 0l11 6-11 5z" fill="currentColor" /></svg>
              </PagerLink>
            </Pager>

            <Actions>
              <Reply>
                reply
                <svg width="17" height="12" viewBox="0 0 17 12" fill="none" stroke="#8f0c9c"><path d="M.5.500h16v11H.5z" strokeWidth="1" /><path d="M1 1l7.500 5.500L16 1M1 11l5.500-5.500M16 11l-5.500-5.500" strokeWidth="1.300" /><path d="M5 4h7l-3.500 4z" fill="#8f0c9c" stroke="none" /></svg>
              </Reply>
              <Flag>
                <Tick type="checkbox" />
                <span><A href="#">prohibited</A><Sup>[<A href="#">?</A>]</Sup></span>
              </Flag>
              <span>Posted <Ago>27 days ago</Ago></span>
              <Print href="#">print</Print>
            </Actions>

            <Title>
              <Star s={16} />
              <span>Frontier coffee <small>(Frontier restaurant)</small></span>
            </Title>

            <Posting>
              <Copy>
                <Body>
                  U left your table and were coming back for your coffee, but the employees cleared your table. I was sitting near u and felt bad that I didn't watch your coffee for you. I wanted to offer to buy u coffee and ask for your number, but was too shy.
                </Body>
                <Notices>
                  <li>do NOT contact me with unsolicited services or offers</li>
                </Notices>
              </Copy>
              <MapColumn>
                <MapFrame>
                  <MapDrawing />
                  <MapControls>
                    <MapButton aria-label="Full screen">
                      <svg width="18" height="16" viewBox="0 0 18 16" fill="none" stroke="#000" strokeWidth="2"><path d="M1 6V1h5M12 1h5v5M17 10v5h-5M6 15H1v-5" /></svg>
                    </MapButton>
                    <MapButton aria-label="Zoom in">
                      <svg width="9" height="9" viewBox="0 0 9 9"><path d="M0 4.500h9M4.500 0v9" stroke="#000" strokeWidth="3" /></svg>
                    </MapButton>
                    <MapButton aria-label="Zoom out">
                      <svg width="9" height="9" viewBox="0 0 9 9"><path d="M0 4.500h9" stroke="#000" strokeWidth="3" /></svg>
                    </MapButton>
                  </MapControls>
                  <Credit>© craigslist - Map data © <a href="#">OpenStreetMap</a></Credit>
                </MapFrame>
                <GoogleMap>(<A href="#">google map</A>)</GoogleMap>
              </MapColumn>
            </Posting>

            <PostInfo>
              <span>post id: 6676480365</span>
              <span>posted: <Ago>27 days ago</Ago></span>
              <EmailBox><A href="#">email to friend</A></EmailBox>
              <BestOf>
                <svg width="12" height="11" viewBox="0 0 12 11"><path d="M6 11Q1 6 .6 4-.2 1 2.500.5 5 .2 6 2.500 7 .2 9.500.5 12.200 1 11.400 4 11 6 6 11z" fill="#d6d6d6" /></svg>
                <span><A href="#">best of</A><Sup>[<A href="#">?</A>]</Sup></span>
              </BestOf>
            </PostInfo>
          </Main>

          <PageFoot />
          <Downloads>
            {files.map((f) => (
              <Download key={f}>
                <svg width="12" height="16" viewBox="0 0 12 16">
                  <path d="M.5.500h7l4 4v11H.5z" fill="#fafafa" stroke="#b5b5b5" /><path d="M7.500.5v4h4" fill="none" stroke="#b5b5b5" />
                  <path d="M3 7h6v5H3z" fill="#8fa3cf" /><circle cx="8.500" cy="11.500" r="2" fill="#7a7a80" />
                </svg>
                <FileName>{f}</FileName>
                <svg width="14" height="4" viewBox="0 0 14 4" fill="#777"><circle cx="2" cy="2" r="1.700" /><circle cx="7" cy="2" r="1.700" /><circle cx="12" cy="2" r="1.700" /></svg>
              </Download>
            ))}
            <ShowAll>Show All</ShowAll>
            <button aria-label="Close downloads"><Cross s={11} c="#666" w={1.800} /></button>
          </Downloads>
        </Window>
        <Panel>
          <PanelCell $h={35}>
            <svg width="9" height="18" viewBox="0 0 9 18"><path d="M0 .5h8.500v17H0z" fill="#777" stroke="#222" /></svg>
          </PanelCell>
          <PanelCell $h={34} />
          <PanelCell $h={11} $bg="#333">
            <svg width="15" height="6" viewBox="0 0 15 6" fill="#bbb"><path d="M10 0v6L6 3zM15 0v6l-4-3z" /></svg>
          </PanelCell>
          <PanelCell $h={41}>
            <svg width="7" height="30" viewBox="0 0 7 30" stroke="#aaa"><path d="M0 2h7" stroke="#111" strokeWidth="4" strokeDasharray="1 1" /><path d="M0 17h6M0 21h6M0 25h6M0 29h6" strokeWidth="1.500" /></svg>
          </PanelCell>
          <PanelCell $bg="#3a3838" />
          <PanelCell $h={22} $bg="#4b4747" />
        </Panel>
      </Stage>

      <Dock>
        {dock.map((d) => (
          <DockItem key={d.name} aria-label={d.name} $on={d.on}><DockSvg>{d.el}</DockSvg></DockItem>
        ))}
        <DockRule />
        <DockItem aria-label="Minimised window">
          <DockSvg>
            <rect x="-1" y="5" width="25" height="15" fill="#3a3a3c" stroke="#555" /><rect x="6" y="7" width="11" height="10" fill="#8894a8" /><path d="M7 15l4-5 5 6z" fill="#c05b45" />
            <rect x="16" y="16" width="9" height="9" fill="#062430" /><text x="20" y="23" textAnchor="middle" fontFamily="Open Sans, sans-serif" fontWeight="700" fontSize="6" fill="#12bfe6">Ps</text>
          </DockSvg>
        </DockItem>
        <DockItem aria-label="Trash">
          <DockSvg>
            <path d="M3 2h18l-3 22H6z" fill="#dfe2e2" /><path d="M8 5l1 17M12 5v17M16 5l-1 17" stroke="#cdd2d3" /><ellipse cx="12" cy="2" rx="9.500" ry="2.500" fill="#eee" /><path d="M5 1.500l3-2 3 2 4-2 4 2" stroke="#6b5a6c" strokeWidth="2" fill="none" />
          </DockSvg>
        </DockItem>
      </Dock>
    </Desktop>
  );
}
